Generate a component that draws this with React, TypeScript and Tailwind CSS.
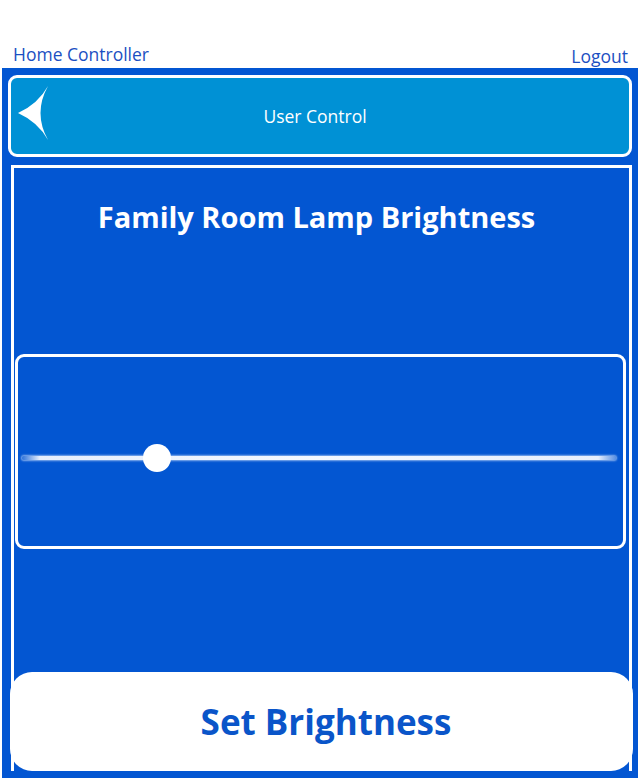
import React from "react";

export default function App() {
  return (
    <div className="w-[640px] h-[780px] bg-white overflow-hidden" style={{ fontFamily: '"Open Sans", "Noto Sans", sans-serif' }}>
      <div className="h-[68px] flex justify-between items-end pl-[13px] pr-[12px] text-[17.5px] text-[#1b4fc2]">
        <span className="leading-[24px] mb-[2px]">Home Controller</span>
        <span className="leading-[24px]">Logout</span>
      </div>
      <div className="mx-[2px] h-[710px] bg-[#0356d2] flex flex-col px-[6px] pt-[7px] pb-[7px]">
        <div className="relative h-[82px] border-[3px] border-white rounded-[9px] bg-[#0091d5] flex items-center justify-center">
          <svg className="absolute left-[5px] top-[6px]" width="32" height="56" viewBox="16 84 32 56">
            <path d="M48 86 Q38 104 18 113 Q38 122 48 140 Q33 113 48 86 Z" fill="white" />
          </svg>
          <span className="text-white text-[17.5px] pr-[10px]">User Control</span>
        </div>
        <div className="mt-[8px] ml-[3px] flex-1 border-[3px] border-b-0 border-white flex flex-col">
          <div className="pt-[30px] pr-[10px] text-center text-white font-bold text-[29px] leading-[38px]">
            Family Room Lamp Brightness
          </div>
          <div className="mt-[118px] ml-[1px] mr-[3px] h-[195px] border-[3px] border-white rounded-[9px] flex flex-col pt-[99px]">
            <div className="relative ml-[4px] mr-[7px] h-[4px] rounded-full bg-[linear-gradient(to_right,rgba(220,232,252,0.2),#e6eefc_3%,#f4f8ff_50%,#e6eefc_97%,rgba(220,232,252,0.4))] shadow-[0_0_2px_1px_rgba(170,200,245,0.8)]">
              <div className="absolute left-[121px] top-[-12px] w-[28px] h-[28px] rounded-full bg-white" />
            </div>
          </div>
          <div className="mt-auto -ml-[4px] -mr-[4px] h-[99px] bg-white rounded-[22px] flex items-center justify-center pl-[9px]">
            <span className="text-[#0a55c9] font-bold text-[35px] leading-[40px]">Set Brightness</span>
          </div>
        </div>
      </div>
    </div>
  );
}
